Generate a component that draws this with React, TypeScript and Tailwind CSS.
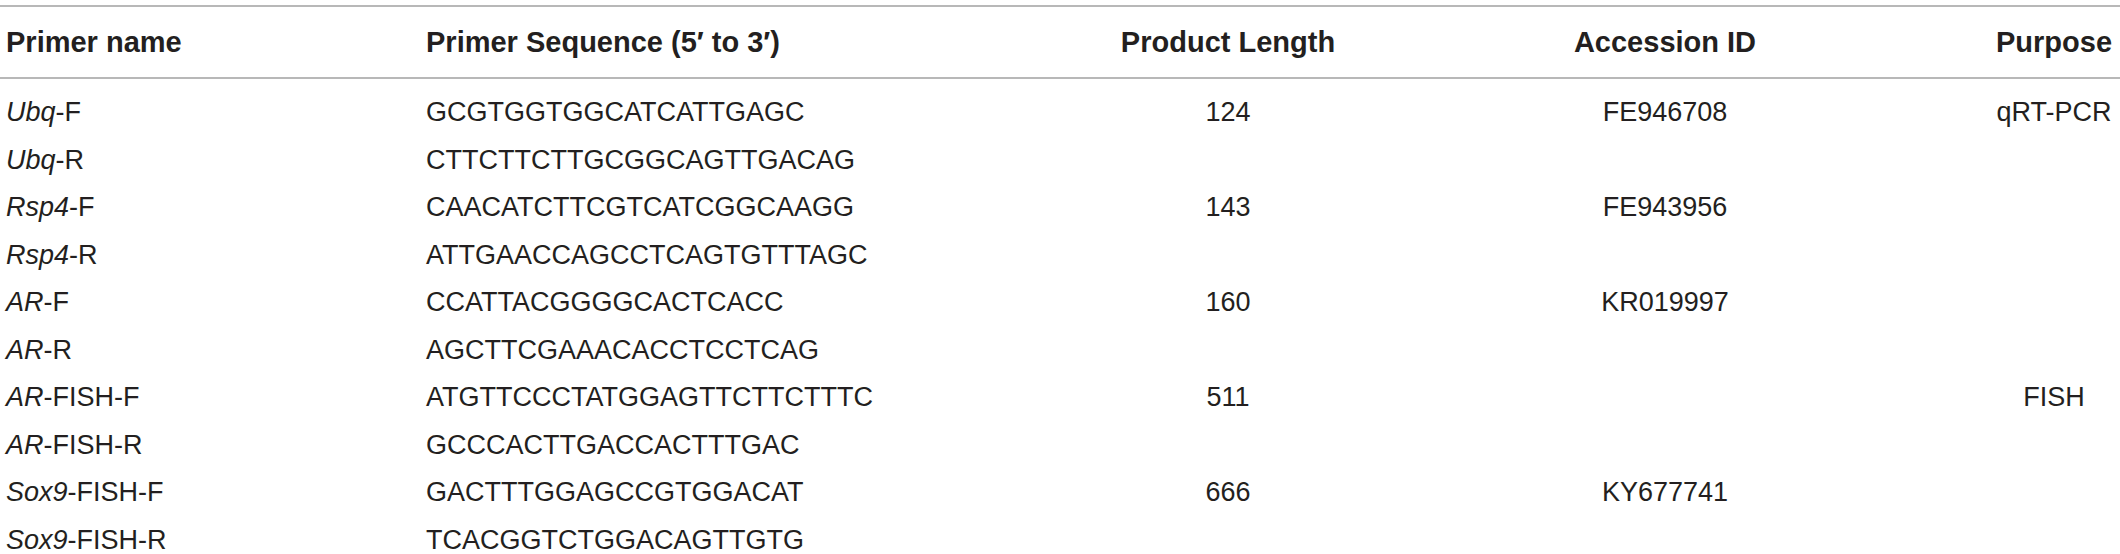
import type { ReactNode } from 'react';

type Row = {
  gene: string;
  suffix: string;
  seq: string;
  length?: string;
  accession?: string;
  purpose?: string;
};

const rows: Row[] = [
  { gene: 'Ubq', suffix: '-F', seq: 'GCGTGGTGGCATCATTGAGC', length: '124', accession: 'FE946708', purpose: 'qRT-PCR' },
  { gene: 'Ubq', suffix: '-R', seq: 'CTTCTTCTTGCGGCAGTTGACAG' },
  { gene: 'Rsp4', suffix: '-F', seq: 'CAACATCTTCGTCATCGGCAAGG', length: '143', accession: 'FE943956' },
  { gene: 'Rsp4', suffix: '-R', seq: 'ATTGAACCAGCCTCAGTGTTTAGC' },
  { gene: 'AR', suffix: '-F', seq: 'CCATTACGGGGCACTCACC', length: '160', accession: 'KR019997' },
  { gene: 'AR', suffix: '-R', seq: 'AGCTTCGAAACACCTCCTCAG' },
  { gene: 'AR', suffix: '-FISH-F', seq: 'ATGTTCCCTATGGAGTTCTTCTTTC', length: '511', purpose: 'FISH' },
  { gene: 'AR', suffix: '-FISH-R', seq: 'GCCCACTTGACCACTTTGAC' },
  { gene: 'Sox9', suffix: '-FISH-F', seq: 'GACTTTGGAGCCGTGGACAT', length: '666', accession: 'KY677741' },
  { gene: 'Sox9', suffix: '-FISH-R', seq: 'TCACGGTCTGGACAGTTGTG' },
];

// column edges: name | sequence (starts 426) | length (centre 1228) | accession (centre 1665) | purpose (centre 2055)
const grid = 'grid grid-cols-[420px_602px_400px_474px_1fr] items-center';

function Purpose({ children }: { children?: ReactNode }) {
  return (
    <div className="flex justify-end">
      <div className="w-[120px] text-center whitespace-nowrap">{children}</div>
    </div>
  );
}

export default function App() {
  return (
    <div className="w-[2120px] h-[554px] overflow-hidden bg-white pt-[5px] pl-[6px] pr-[6px] text-[#231f20] font-['Liberation_Sans',Arial,sans-serif]">
      <div className="-mx-[6px] border-t-2 border-[#b8b8b8]" />

      {/* header */}
      <div className={`${grid} h-[70px] text-[29px] font-bold leading-none`}>
        <div>Primer name</div>
        <div>Primer Sequence (5′ to 3′)</div>
        <div className="text-center">Product Length</div>
        <div className="text-center">Accession ID</div>
        <Purpose>Purpose</Purpose>
      </div>
      <div className="-mx-[6px] border-t-2 border-[#b8b8b8]" />

      {/* body */}
      <div className="pt-[10px] text-[27px] leading-none">
        {rows.map((r, i) => (
          <div key={i} className={`${grid} h-[47.5px]`}>
            <div>
              <span className="italic">{r.gene}</span>
              {r.suffix}
            </div>
            <div>{r.seq}</div>
            <div className="text-center">{r.length}</div>
            <div className="text-center">{r.accession}</div>
            <Purpose>{r.purpose}</Purpose>
          </div>
        ))}
      </div>
    </div>
  );
}
